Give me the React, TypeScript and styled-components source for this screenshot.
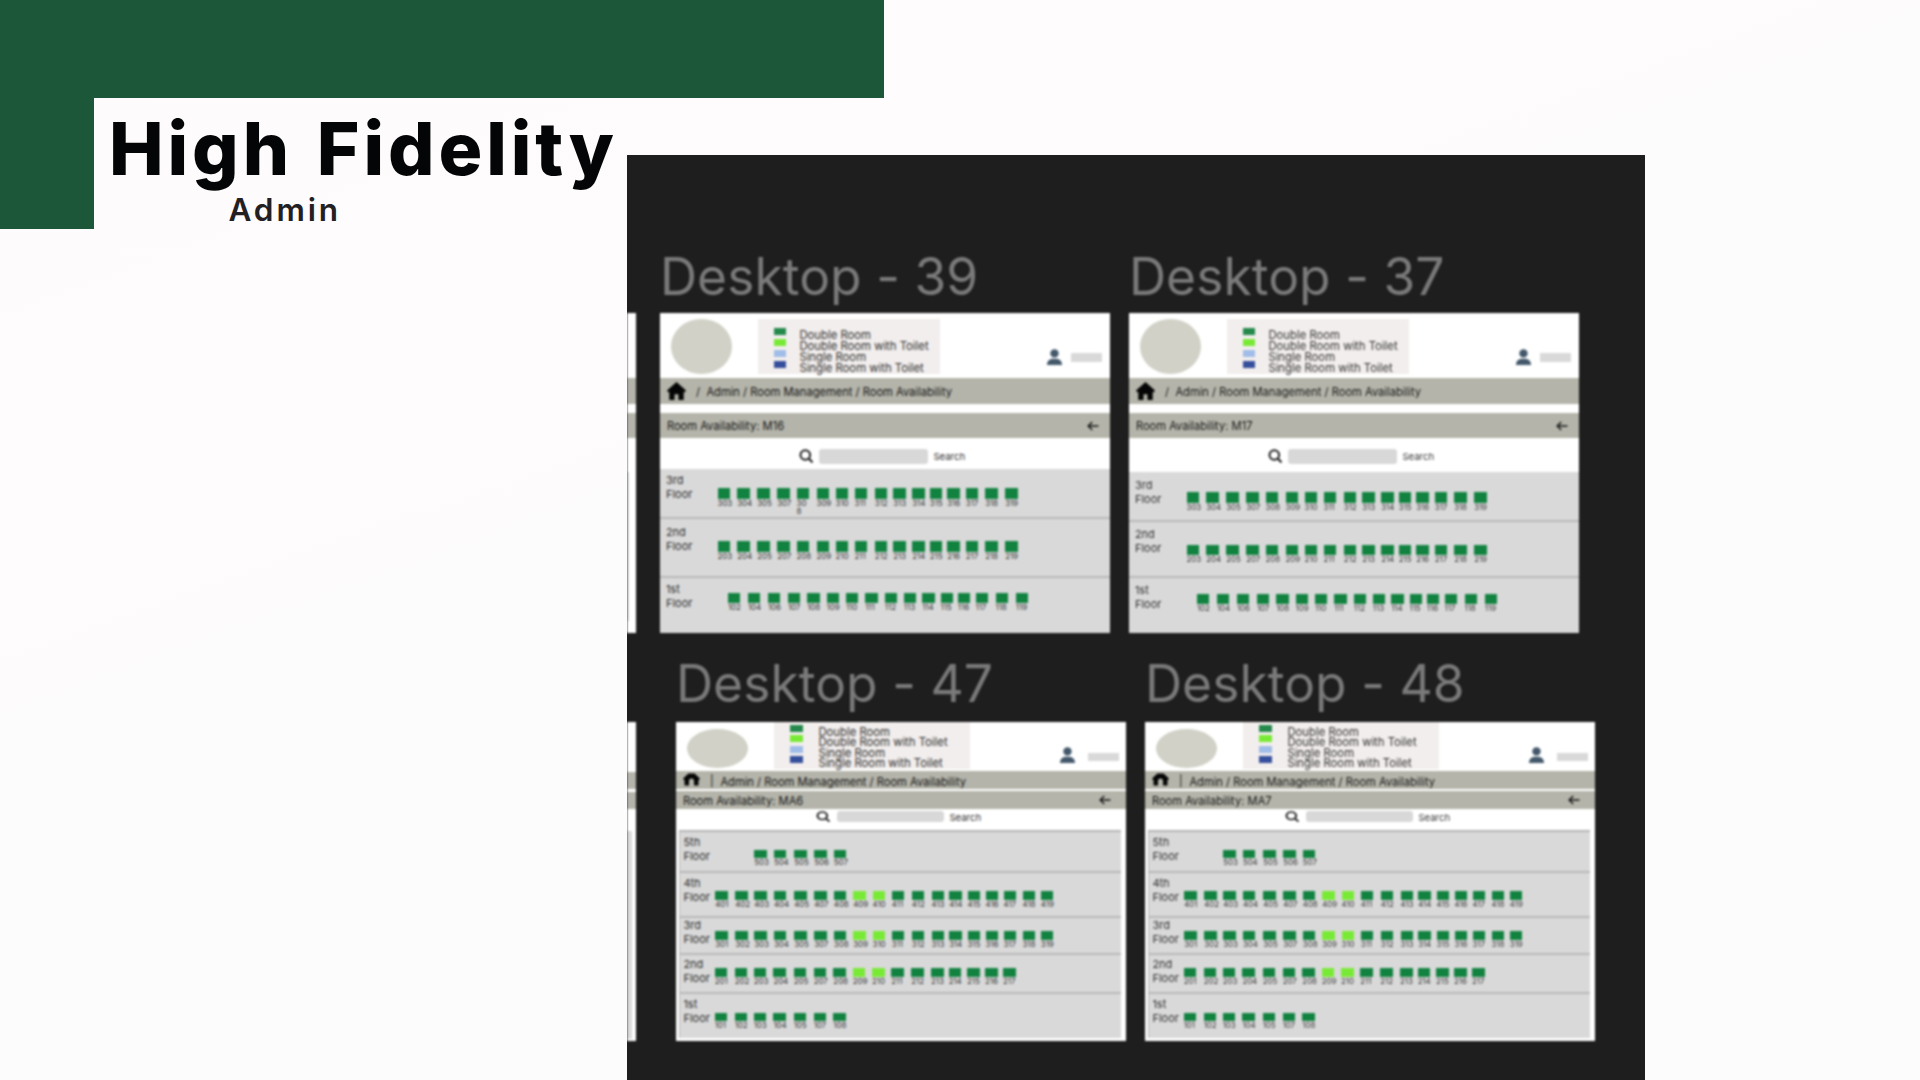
import React from "react";
import styled, { createGlobalStyle } from "styled-components";

const Global = createGlobalStyle`
  html, body { margin: 0; padding: 0; }
  body { width: 1920px; height: 1080px; overflow: hidden; background: #fdfbfc; }
  *, *::before, *::after { box-sizing: border-box; }
`;

const Slide = styled.main`
  width: 1920px;
  height: 1080px;
  overflow: hidden;
  display: grid;
  grid-template-columns: 94px 533.4px 256.6px 761px 1fr;
  grid-template-rows: 98px 57px 74.4px 1fr;
  background: linear-gradient(160deg, #fefbfc 0%, #fdfcfd 55%, #fcfcfc 100%);
  font-family: Inter, "Liberation Sans", sans-serif;
`;

const BannerTop = styled.div`
  grid-column: 1 / 4;
  grid-row: 1;
  background: #1d573a;
`;

const BannerSide = styled.div`
  grid-column: 1;
  grid-row: 2 / 4;
  background: #1d573a;
`;

const Heading = styled.header`
  grid-column: 2;
  grid-row: 2 / 4;
  display: flex;
  flex-direction: column;
  padding: 7px 0 0 15px;
`;

const Title = styled.h1`
  margin: 0;
  font-size: 73px;
  line-height: 88px;
  font-weight: 760;
  letter-spacing: 3.9px;
  word-spacing: 4px;
  color: #040506;
  white-space: nowrap;
`;

const Subtitle = styled.p`
  margin: 0;
  padding: 0 0 0 119.5px;
  font-size: 31.5px;
  line-height: 34px;
  font-weight: 600;
  letter-spacing: 2.9px;
  color: #222022;
`;

const Canvas = styled.section`
  grid-column: 3 / 5;
  grid-row: 3 / 5;
  background: #1e1e1e;
  overflow: hidden;
  padding-top: 92px;
`;

const BoardRow = styled.div<{ $first: number; $gap: number; $top: number }>`
  display: flex;
  align-items: flex-end;
  margin-top: ${(p) => p.$top}px;
  filter: blur(0.85px);
  > :nth-child(2) { margin-left: ${(p) => p.$first}px; }
  > :nth-child(3) { margin-left: ${(p) => p.$gap}px; }
`;

const BoardName = styled.h2<{ $drop: number }>`
  margin: 0 0 ${(p) => p.$drop}px;
  height: 59px;
  font-size: 51.5px;
  line-height: 59px;
  font-weight: 400;
  letter-spacing: 0.05px;
  color: #7a7a7a;
  white-space: nowrap;
  filter: blur(0.5px);
`;

const Board = styled.article<{ $w: number }>`
  width: ${(p) => p.$w}px;
  flex: none;
`;

const Frame = styled.div<{ $h: number }>`
  height: ${(p) => p.$h}px;
  background: #ffffff;
  display: flex;
  flex-direction: column;
  overflow: hidden;
  color: #303030;
`;

const Top = styled.div<{ $h: number; $pad: number }>`
  height: ${(p) => p.$h}px;
  flex: none;
  display: flex;
  align-items: flex-start;
  padding-left: ${(p) => p.$pad}px;
`;

const Logo = styled.div<{ $top: number; $h: number }>`
  width: 61px;
  height: ${(p) => p.$h}px;
  margin-top: ${(p) => p.$top}px;
  border-radius: 50%;
  background: #d1d1c7;
`;

const Legend = styled.div<{ $top: number; $left: number; $w: number; $h: number; $pad: number }>`
  margin: ${(p) => p.$top}px 0 0 ${(p) => p.$left}px;
  width: ${(p) => p.$w}px;
  height: ${(p) => p.$h}px;
  padding: ${(p) => p.$pad}px 0 0 16px;
  background: #f2eeed;
`;

const LegendItem = styled.div<{ $h: number }>`
  display: flex;
  height: ${(p) => p.$h}px;
`;

const Swatch = styled.span<{ $color: string; $w: number }>`
  width: ${(p) => p.$w}px;
  height: 7px;
  background: ${(p) => p.$color};
`;

const LegendText = styled.span<{ $left: number }>`
  margin: 1px 0 0 ${(p) => p.$left}px;
  font-size: 11.3px;
  line-height: 13px;
  white-space: nowrap;
`;

const User = styled.div<{ $top: number; $right: number; $gap: number }>`
  margin: ${(p) => p.$top}px ${(p) => p.$right}px 0 auto;
  display: flex;
  align-items: center;
  gap: ${(p) => p.$gap}px;
`;

const UserName = styled.span<{ $top: number; $h: number }>`
  width: 31px;
  height: ${(p) => p.$h}px;
  margin-top: ${(p) => p.$top}px;
  background: #d9d9d9;
`;

const Bar = styled.div<{ $h: number; $gap: number }>`
  height: ${(p) => p.$h}px;
  flex: none;
  margin-bottom: ${(p) => p.$gap}px;
  padding: 0 10px 0 7px;
  display: flex;
  align-items: center;
  background: #b4b4aa;
  color: #161616;
  font-size: 11.15px;
  white-space: pre;
`;

const Divider = styled.span<{ $right: number }>`
  margin: 2px ${(p) => p.$right}px 0 10px;
  width: 4px;
`;

const Crumbs = styled.span<{ $top: number }>`
  margin-top: ${(p) => p.$top}px;
`;

const Back = styled.span<{ $right: number }>`
  display: flex;
  margin-left: auto;
  padding: 1px ${(p) => p.$right}px 0 0;
`;

const SearchRow = styled.div<{ $h: number; $left: number; $top: number }>`
  height: ${(p) => p.$h}px;
  flex: none;
  display: flex;
  align-items: flex-start;
  padding: ${(p) => p.$top}px 0 0 ${(p) => p.$left}px;
`;

const SearchField = styled.span<{ $w: number; $h: number; $left: number }>`
  width: ${(p) => p.$w}px;
  height: ${(p) => p.$h}px;
  margin: 0 5px 0 ${(p) => p.$left}px;
  border-radius: 3px;
  background: #d8d8d8;
`;

const SearchText = styled.span<{ $h: number }>`
  font-size: 9.6px;
  line-height: ${(p) => p.$h}px;
`;

const Floors = styled.div<{ $inset: boolean }>`
  flex: 1;
  background: #d9d9d9;
  margin: ${(p) => (p.$inset ? "0 5px 3px 3px" : "0")};
  border: ${(p) => (p.$inset ? "solid #b5b5b5" : "none")};
  border-width: ${(p) => (p.$inset ? "2px 0 0 1px" : "0")};
`;

const Floor = styled.div<{ $h: number; $last: boolean }>`
  display: flex;
  height: ${(p) => p.$h}px;
  border-bottom: ${(p) => (p.$last ? "none" : "2px solid #b9b9b9")};
`;

const FloorName = styled.div<{ $top: number; $w: number; $pad: number }>`
  flex: none;
  width: ${(p) => p.$w}px;
  padding: ${(p) => p.$top}px 0 0 ${(p) => p.$pad}px;
  font-size: 11px;
  line-height: 14px;
`;

const Rooms = styled.div<{ $top: number }>`
  display: flex;
  padding-top: ${(p) => p.$top}px;
`;

const Room = styled.div<{ $w: number }>`
  flex: none;
  width: ${(p) => p.$w}px;
`;

const RoomBox = styled.div<{ $h: number; $toilet: boolean }>`
  width: 12.5px;
  height: ${(p) => p.$h}px;
  background: ${(p) => (p.$toilet ? "#78ea35" : "#128240")};
`;

const RoomNo = styled.div`
  width: 14px;
  font-size: 8px;
  line-height: 8.5px;
  letter-spacing: -0.1px;
  color: #3a3a3a;
  white-space: pre;
`;

const Sliver = styled.div<{ $h: number; $first: number }>`
  width: 8.5px;
  height: ${(p) => p.$h}px;
  flex: none;
  background: #ffffff;
  padding-top: ${(p) => p.$first}px;
`;

const SliverBar = styled.div<{ $h: number; $gap: number }>`
  height: ${(p) => p.$h}px;
  margin-bottom: ${(p) => p.$gap}px;
  background: #b4b4aa;
`;

const SliverPane = styled.div<{ $w: number; $h: number; $top: number }>`
  width: ${(p) => p.$w}px;
  height: ${(p) => p.$h}px;
  margin-top: ${(p) => p.$top}px;
  background: #d9d9d9;
`;

const HomeIcon = ({ w, h }: { w: number; h: number }) => (
  <svg width={w} height={h} viewBox="0 0 20 18" preserveAspectRatio="none">
    <path d="M10 0 20 8.6 18.6 10.400 17.6 9.8V18H12V12.2H8V18H2.4V9.8L1.4 10.400 0 8.6Z" fill="#050505" />
  </svg>
);

const FlatHomeIcon = () => (
  <svg width="17" height="13" viewBox="0 0 17 13">
    <path d="M5.500 0.500h6L16.500 5V7h-1v5.500h-4.500V8a2.500 2.500 0 0 0-5 0v4.500H1.500V7h-1V5Z" fill="#050505" />
  </svg>
);

const PersonIcon = () => (
  <svg width="15" height="16" viewBox="0 0 15 16">
    <circle cx="7.5" cy="4.4" r="4.2" fill="#43586b" />
    <path d="M0 16c0-4 2.400-5.600 5-6.200h5c2.600.6 5 2.200 5 6.200Z" fill="#43586b" />
  </svg>
);

const ArrowIcon = () => (
  <svg width="12" height="10" viewBox="0 0 12 10" fill="none" stroke="#1a1a1a" strokeWidth="1.500">
    <path d="M11.500 5H1.200M5.200 1 1.200 5l4 4" />
  </svg>
);

const SearchIcon = ({ h }: { h: number }) => (
  <svg width="14" height={h} viewBox="0 0 14 14" preserveAspectRatio="none" fill="none" stroke="#1f1f1f" strokeWidth="2">
    <circle cx="6.300" cy="6" r="4.800" />
    <path d="m9.800 9.500 3.700 4" />
  </svg>
);

type FloorData = {
  name: string;
  h: number;
  labelTop: number;
  roomTop: number;
  start: number;
  centers: number[];
  numbers: string[];
};

const range = (prefix: number, list: number[]) => list.map((n) => String(prefix * 100 + n));

const TALL_A = [63.7, 83.3, 103.3, 123.3, 142.7, 162.7, 181.7, 200.7, 221, 239.3, 258.3, 276, 293.3, 312, 331.3, 351.3];
const TALL_B = [74, 94, 114, 134, 153.3, 172.7, 192, 211.3, 231, 250, 268.3, 286.7, 304, 321.7, 341.7, 362];
const WIDE = [45.3, 65.3, 84.3, 104, 124.3, 144.3, 164, 183.3, 202.7, 222, 242, 261.7, 279.3, 297.7, 315.7, 333.7, 352.7, 371];
const N_TALL = [3, 4, 5, 7, 8, 9, 10, 11, 12, 13, 14, 15, 16, 17, 18, 19];
const N_TALL1 = [2, 4, 6, 7, 8, 9, 10, 11, 12, 13, 14, 15, 16, 17, 18, 19];
const N_WIDE = [1, 2, 3, 4, 5, 7, 8, 9, 10, 11, 12, 13, 14, 15, 16, 17, 18, 19];

const floor = (
  name: string, h: number, labelTop: number, roomTop: number, centers: number[], numbers: string[],
): FloorData => ({ name, h, labelTop, roomTop, start: centers[0] - 6, centers, numbers });

const floors39 = [
  floor("3rd", 50, 3.5, 19, TALL_A, range(3, N_TALL).map((n) => (n === "308" ? "30\n8" : n))),
  floor("2nd", 59, 5.5, 22, TALL_A, range(2, N_TALL)),
  floor("1st", 55, 4, 14.5, TALL_B, range(1, N_TALL1)),
];

const floors37 = [
  floor("3rd", 50, 5.5, 20, TALL_A, range(3, N_TALL)),
  floor("2nd", 56, 5, 22.5, TALL_A, range(2, N_TALL)),
  floor("1st", 55, 5, 15.5, TALL_B, range(1, N_TALL1)),
];

const floorsCompact = [
  floor("5th", 40.500, 3, 17.5, WIDE.slice(2, 7), range(5, [3, 4, 5, 6, 7])),
  floor("4th", 45, 3, 18.5, WIDE, range(4, N_WIDE)),
  floor("3rd", 37, 0.5, 13.5, WIDE, range(3, N_WIDE)),
  floor("2nd", 39.500, 2, 13.500, WIDE.slice(0, 16).map((x) => x - 0.500), range(2, N_WIDE.slice(0, 16))),
  floor("1st", 44, 2.500, 18.500, WIDE.slice(0, 7).map((x) => x - 0.500), range(1, N_WIDE.slice(0, 7))),
];

const LEGEND: [string, string][] = [
  ["#24894b", "Double Room"],
  ["#78ea35", "Double Room with Toilet"],
  ["#a0bce8", "Single Room"],
  ["#354f9c", "Single Room with Toilet"],
];

const FloorList = ({ floors, compact }: { floors: FloorData[]; compact: boolean }) => (
  <Floors $inset={compact}>
    {floors.map((f, fi) => (
      <Floor key={f.name} $h={f.h} $last={fi === floors.length - 1}>
        <FloorName $top={f.labelTop} $w={f.start - (compact ? 4 : 0)} $pad={compact ? 3.500 : 6}>
          {f.name}<br />Floor
        </FloorName>
        <Rooms $top={f.roomTop}>
          {f.centers.map((c, i) => (
            <Room key={c} $w={i < f.centers.length - 1 ? f.centers[i + 1] - c : 14}>
              <RoomBox $h={compact ? 8.500 : 10.500} $toilet={compact && f.centers.length > 7 && (i === 7 || i === 8)} />
              <RoomNo>{f.numbers[i]}</RoomNo>
            </Room>
          ))}
        </Rooms>
      </Floor>
    ))}
  </Floors>
);

const LegendBlock = ({ compact }: { compact: boolean }) => (
  <Legend
    $top={compact ? 0 : 6}
    $left={compact ? 26.500 : 26}
    $w={compact ? 196 : 182}
    $h={compact ? 47 : 55}
    $pad={compact ? 3 : 8.500}
  >
    {LEGEND.map(([color, text]) => (
      <LegendItem key={text} $h={compact ? 10.500 : 11.300}>
        <Swatch $color={color} $w={compact ? 13 : 12} />
        <LegendText $left={compact ? 15 : 13}>{text}</LegendText>
      </LegendItem>
    ))}
  </Legend>
);

const TallBoard = ({ name, block, floors, searchH }: { name: string; block: string; floors: FloorData[]; searchH: number }) => (
  <Board $w={450}>
    <BoardName $drop={7}>{name}</BoardName>
    <Frame $h={319.500}>
      <Top $h={65} $pad={11.500}>
        <Logo $top={6} $h={55} />
        <LegendBlock compact={false} />
        <User $top={35.500} $right={8} $gap={9}>
          <PersonIcon />
          <UserName $top={2} $h={9} />
        </User>
      </Top>
      <Bar $h={26} $gap={8.500}>
        <HomeIcon w={19} h={18} />
        <Divider $right={6.500}>/</Divider>
        <Crumbs $top={2}>Admin / Room Management / Room Availability</Crumbs>
      </Bar>
      <Bar $h={25.500} $gap={0}>
        <Crumbs $top={2}>Room Availability: {block}</Crumbs>
        <Back $right={1}><ArrowIcon /></Back>
      </Bar>
      <SearchRow $h={searchH} $left={139.500} $top={11}>
        <SearchIcon h={14} />
        <SearchField $w={109} $h={15} $left={6} />
        <SearchText $h={15}>Search</SearchText>
      </SearchRow>
      <FloorList floors={floors} compact={false} />
    </Frame>
  </Board>
);

const CompactBoard = ({ name, block }: { name: string; block: string }) => (
  <Board $w={450}>
    <BoardName $drop={8.500}>{name}</BoardName>
    <Frame $h={319.500}>
      <Top $h={49.500} $pad={11}>
        <Logo $top={7} $h={39} />
        <LegendBlock compact />
        <User $top={25.500} $right={6.500} $gap={13}>
          <PersonIcon />
          <UserName $top={3} $h={8} />
        </User>
      </Top>
      <Bar $h={17.500} $gap={2.500}>
        <FlatHomeIcon />
        <Divider $right={6.500}>|</Divider>
        <Crumbs $top={4}>Admin / Room Management / Room Availability</Crumbs>
      </Bar>
      <Bar $h={17.500} $gap={0}>
        <Crumbs $top={3}>Room Availability: {block}</Crumbs>
        <Back $right={5}><ArrowIcon /></Back>
      </Bar>
      <SearchRow $h={21.500} $left={140} $top={2.500}>
        <SearchIcon h={11} />
        <SearchField $w={107} $h={11} $left={7.500} />
        <SearchText $h={13}>Search</SearchText>
      </SearchRow>
      <FloorList floors={floorsCompact} compact />
    </Frame>
  </Board>
);

export default function App() {
  return (
    <>
      <Global />
      <Slide>
        <BannerTop />
        <BannerSide />
        <Heading>
          <Title>High Fidelity</Title>
          <Subtitle>Admin</Subtitle>
        </Heading>
        <Canvas>
          <BoardRow $first={24} $gap={19} $top={0}>
            <Sliver $h={319.500} $first={65}>
              <SliverBar $h={26} $gap={8.500} />
              <SliverBar $h={25.500} $gap={0} />
              <SliverPane $w={2} $h={149} $top={34} />
            </Sliver>
            <TallBoard name="Desktop - 39" block="M16" floors={floors39} searchH={31} />
            <TallBoard name="Desktop - 37" block="M17" floors={floors37} searchH={34} />
          </BoardRow>
          <BoardRow $first={40} $gap={19} $top={21.500}>
            <Sliver $h={319.500} $first={50}>
              <SliverBar $h={17} $gap={3} />
              <SliverBar $h={17} $gap={0} />
              <SliverPane $w={5} $h={208} $top={22} />
            </Sliver>
            <CompactBoard name="Desktop - 47" block="MA6" />
            <CompactBoard name="Desktop - 48" block="MA7" />
          </BoardRow>
        </Canvas>
      </Slide>
    </>
  );
}
